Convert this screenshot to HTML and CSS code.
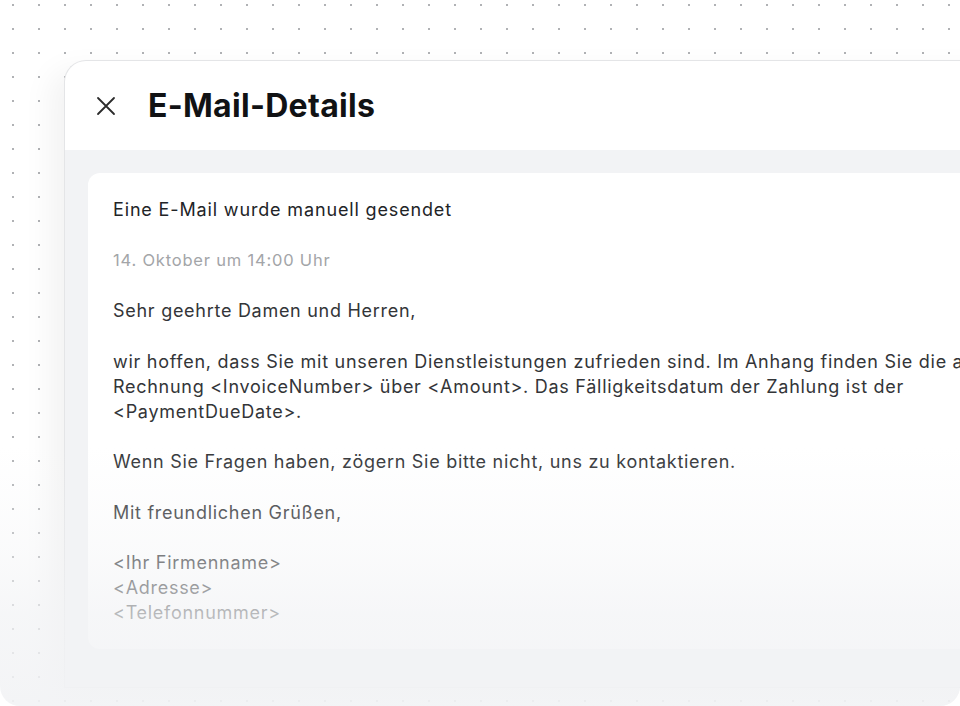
FILE: index.html
```html
<!DOCTYPE html>
<html lang="de">
<head>
    <meta charset="UTF-8">
    <meta name="viewport" content="width=device-width, initial-scale=1.0">
    <title>E-Mail-Details</title>
    <link rel="stylesheet" href="styles.css">
</head>
<body>

    <div class="stage">
        <div class="panel">
            <div class="panel-header">
                <button class="close-btn" aria-label="Schließen">
                    <svg width="20" height="20" viewBox="0 0 20 20">
                        <path d="M2 2 L18 18 M18 2 L2 18" stroke="#2b2b2b" stroke-width="1.8" stroke-linecap="round"/>
                    </svg>
                </button>
                <h1>E-Mail-Details</h1>
            </div>

            <div class="panel-body">
                <div class="mail-card">
                    <p class="mail-title">Eine E-Mail wurde manuell gesendet</p>
                    <p class="mail-date">14. Oktober um 14:00 Uhr</p>

                    <div class="mail-text">
                        <p>Sehr geehrte Damen und Herren,</p>
                        <p>wir hoffen, dass Sie mit unseren Dienstleistungen zufrieden sind. Im Anhang finden Sie die aktuelle<br>Rechnung &lt;InvoiceNumber&gt; über &lt;Amount&gt;. Das Fälligkeitsdatum der Zahlung ist der<br>&lt;PaymentDueDate&gt;.</p>
                        <p>Wenn Sie Fragen haben, zögern Sie bitte nicht, uns zu kontaktieren.</p>
                        <p>Mit freundlichen Grüßen,</p>
                        <p>&lt;Ihr Firmenname&gt;<br>&lt;Adresse&gt;<br>&lt;Telefonnummer&gt;</p>
                    </div>
                </div>
            </div>
        </div>

        <div class="fade"></div>
    </div>

</body>
</html>
```

FILE: styles.css
```css
* {
    box-sizing: border-box;
}

html, body {
    margin: 0;
    height: 100%;
    background: #ffffff;
}

body {
    font-family: Inter, "Open Sans", sans-serif;
    color: #333538;
}

.stage {
    position: relative;
    width: 960px;
    height: 706px;
    overflow: hidden;
    border-radius: 0 0 20px 20px;
    padding: 60px 0 0 64px;
    background-color: #ffffff;
    background-image: radial-gradient(circle, #b0b2b5 0.9px, transparent 1.2px);
    background-size: 26px 24px;
    background-position: 0 -7px;
}

.panel {
    width: 940px;
    height: 628px;
    background: #ffffff;
    border: 1px solid #e4e5e7;
    border-right: none;
    border-radius: 22px 0 0 0;
    box-shadow: -14px 10px 30px rgba(0, 0, 0, 0.05);
    overflow: hidden;
    display: flex;
    flex-direction: column;
}

.panel-header {
    height: 89px;
    display: flex;
    align-items: center;
    gap: 32px;
    padding-left: 31px;
    flex-shrink: 0;
}

.close-btn {
    background: none;
    border: none;
    padding: 0;
    width: 20px;
    height: 20px;
    display: flex;
    cursor: pointer;
}

h1 {
    margin: 0;
    font-size: 32px;
    font-weight: 700;
    color: #111214;
    letter-spacing: 0.3px;
}

.panel-body {
    flex: 1;
    background: #f2f3f5;
    padding: 23px 0 38px 23px;
}

.mail-card {
    background: #ffffff;
    border-radius: 12px 0 0 12px;
    height: 100%;
    padding: 24px 25px;
    font-size: 18px;
    line-height: 25px;
    letter-spacing: 0.72px;
    overflow: hidden;
}

.mail-card p {
    margin: 0;
}

.mail-title {
    margin-bottom: 26px !important;
    color: #222427;
    letter-spacing: 0.85px;
}

.mail-date {
    font-size: 16.5px;
    line-height: 24px;
    color: #a3a5a8;
    letter-spacing: 0.8px;
    margin-bottom: 26px !important;
}

.mail-text {
    width: 1100px;
}

.mail-text p + p {
    margin-top: 25.5px;
}

.fade {
    position: absolute;
    left: 0;
    right: 0;
    bottom: 0;
    height: 260px;
    background: linear-gradient(to bottom,
        rgba(242, 243, 245, 0) 0%,
        rgba(242, 243, 245, 0.35) 40%,
        rgba(242, 243, 245, 0.7) 65%,
        rgba(242, 243, 245, 0.92) 100%);
    pointer-events: none;
}
```
